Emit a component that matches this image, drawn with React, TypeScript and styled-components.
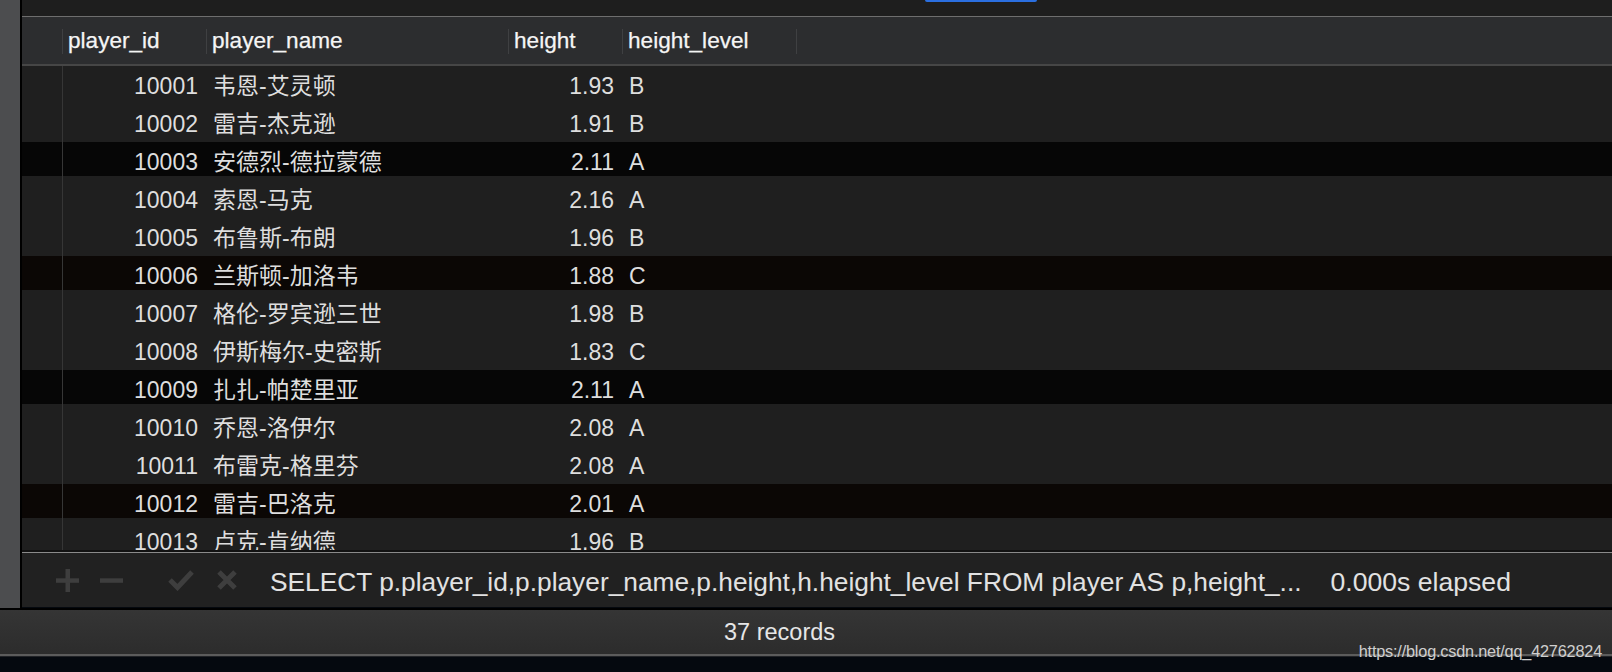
import React from "react";
import styled, { createGlobalStyle } from "styled-components";

const GlobalStyle = createGlobalStyle`
  html, body {
    margin: 0;
    padding: 0;
    background: #05090f;
    width: 1612px;
    height: 672px;
    overflow: hidden;
  }
  * { box-sizing: border-box; }
`;

const FONT = `"Liberation Sans", Arial, "Noto Sans CJK SC", sans-serif`;

type Row = { id: number; name: string; height: string; level: string; tone?: "black" | "brown" };

const rows: Row[] = [
  { id: 10001, name: "韦恩-艾灵顿", height: "1.93", level: "B" },
  { id: 10002, name: "雷吉-杰克逊", height: "1.91", level: "B" },
  { id: 10003, name: "安德烈-德拉蒙德", height: "2.11", level: "A", tone: "black" },
  { id: 10004, name: "索恩-马克", height: "2.16", level: "A" },
  { id: 10005, name: "布鲁斯-布朗", height: "1.96", level: "B" },
  { id: 10006, name: "兰斯顿-加洛韦", height: "1.88", level: "C", tone: "brown" },
  { id: 10007, name: "格伦-罗宾逊三世", height: "1.98", level: "B" },
  { id: 10008, name: "伊斯梅尔-史密斯", height: "1.83", level: "C" },
  { id: 10009, name: "扎扎-帕楚里亚", height: "2.11", level: "A", tone: "black" },
  { id: 10010, name: "乔恩-洛伊尔", height: "2.08", level: "A" },
  { id: 10011, name: "布雷克-格里芬", height: "2.08", level: "A" },
  { id: 10012, name: "雷吉-巴洛克", height: "2.01", level: "A", tone: "brown" },
  { id: 10013, name: "卢克-肯纳德", height: "1.96", level: "B" },
];

const Page = styled.div`
  position: relative;
  width: 1612px;
  height: 672px;
  display: flex;
  flex-direction: column;
  font-family: ${FONT};
  background: #05090f;
`;

const Upper = styled.div`
  display: flex;
  height: 608px;
`;

const SideStrip = styled.div`
  width: 22px;
  background: #4c4d4f;
  border-right: 2px solid #000;
`;

const Main = styled.div`
  flex: 1;
  display: flex;
  flex-direction: column;
  min-width: 0;
`;

const TopBar = styled.div`
  height: 17px;
  background: #1e1e1e;
  border-bottom: 1px solid #6e6e6e;
  position: relative;
`;

const BlueTab = styled.div`
  position: absolute;
  left: 903px;
  top: 0;
  width: 112px;
  height: 2px;
  background: #2b6fe0;
  border-radius: 0 0 2px 2px;
`;

const columns = [
  { key: "blank", width: 41 },
  { key: "player_id", width: 144 },
  { key: "player_name", width: 302 },
  { key: "height", width: 114 },
  { key: "height_level", width: 174 },
];

const HeaderRow = styled.div`
  display: flex;
  height: 49px;
  background: #2c2d2f;
  border-bottom: 2px solid #464646;
`;

const HeadCell = styled.div<{ $w: number }>`
  width: ${(p) => p.$w}px;
  flex: none;
  display: flex;
  align-items: center;
  padding-left: 5px;
  color: #f5f5f5;
  font-size: 22.6px;
  position: relative;
  -webkit-text-stroke: 0.25px #f5f5f5;
  &::after {
    content: "";
    position: absolute;
    right: 0;
    top: 12px;
    bottom: 10px;
    width: 1px;
    background: #3f4042;
  }
`;

const HeadFill = styled.div`
  flex: 1;
`;

const Body = styled.div`
  height: 484px;
  overflow: hidden;
  background: #1f1f1f;
  position: relative;
`;

const GridLine = styled.div`
  position: absolute;
  left: 40px;
  top: 0;
  bottom: 0;
  width: 1px;
  background: #363636;
`;

const BodyRow = styled.div<{ $tone?: "black" | "brown" }>`
  display: flex;
  height: 38px;
  background: ${(p) =>
    p.$tone === "black"
      ? "linear-gradient(#060606 0 34px, #1f1f1f 34px)"
      : p.$tone === "brown"
      ? "linear-gradient(#0b0705 0 34px, #1f1f1f 34px)"
      : "#1f1f1f"};
  color: #dedede;
  font-size: 23px;
  line-height: 34px;
  padding-top: 3px;
`;

const Cell = styled.div<{ $w: number; $align?: "right" | "left" }>`
  width: ${(p) => p.$w}px;
  flex: none;
  text-align: ${(p) => p.$align ?? "left"};
  padding: ${(p) => (p.$align === "right" ? "0 9px 0 0" : "0 0 0 6px")};
  white-space: nowrap;
  overflow: hidden;
`;

const Divider = styled.div`
  height: 3px;
  background: #111;
  border-bottom: 1px solid #8a8a8a;
`;

const Toolbar = styled.div`
  height: 54px;
  background: #212121;
  display: flex;
  align-items: center;
  color: #e2e2e2;
  font-size: 26.3px;
`;

const IconSlot = styled.div<{ $ml: number }>`
  margin-left: ${(p) => p.$ml}px;
  display: flex;
  align-items: center;
  flex: none;
`;

const SqlText = styled.div`
  margin-left: 32px;
  white-space: nowrap;
  flex: none;
  padding-top: 4px;
`;

const Elapsed = styled.div`
  margin-left: 29px;
  white-space: nowrap;
  padding-top: 4px;
  font-size: 26.6px;
`;

const StatusBar = styled.div`
  height: 48px;
  border-top: 2px solid #000;
  background: linear-gradient(#353535, #2c2c2c);
  border-bottom: 2px solid #5c5c5c;
  display: flex;
  align-items: center;
  padding-left: 724px;
  color: #e6e6e6;
  font-size: 23.5px;
`;

const BottomEdge = styled.div`
  flex: 1;
  background: #05090f;
  border-top: 1px solid #202226;
`;

const Watermark = styled.div`
  position: absolute;
  right: 10px;
  top: 642px;
  font-family: "Liberation Sans", Arial, sans-serif;
  font-size: 16.3px;
  color: #cfcfcf;
  letter-spacing: -0.2px;
`;

const ICON = "#3e3e3e";

const PlusIcon = () => (
  <svg width="23" height="23" viewBox="0 0 23 23">
    <rect x="9.5" y="0" width="4.5" height="23" fill={ICON} />
    <rect x="0" y="9.3" width="23" height="4.5" fill={ICON} />
  </svg>
);

const MinusIcon = () => (
  <svg width="23" height="23" viewBox="0 0 23 23">
    <rect x="0" y="9.3" width="23" height="4.5" fill={ICON} />
  </svg>
);

const CheckIcon = () => (
  <svg width="26" height="22" viewBox="0 0 26 22">
    <path d="M2 11 L9.5 18.5 L24 3" stroke={ICON} strokeWidth="5" fill="none" />
  </svg>
);

const CrossIcon = () => (
  <svg width="22" height="22" viewBox="0 0 22 22">
    <path d="M3 3 L19 19 M19 3 L3 19" stroke={ICON} strokeWidth="5" fill="none" />
  </svg>
);

export default function App() {
  return (
    <>
      <GlobalStyle />
      <Page>
        <Upper>
          <SideStrip />
          <Main>
            <TopBar>
              <BlueTab />
            </TopBar>
            <HeaderRow>
              {columns.map((c) => (
                <HeadCell key={c.key} $w={c.width}>
                  {c.key === "blank" ? "" : c.key}
                </HeadCell>
              ))}
              <HeadFill />
            </HeaderRow>
            <Body>
              <GridLine />
              {rows.map((r) => (
                <BodyRow key={r.id} $tone={r.tone}>
                  <Cell $w={columns[0].width} />
                  <Cell $w={columns[1].width} $align="right">
                    {r.id}
                  </Cell>
                  <Cell $w={columns[2].width}>{r.name}</Cell>
                  <Cell $w={columns[3].width} $align="right">
                    {r.height}
                  </Cell>
                  <Cell $w={columns[4].width}>{r.level}</Cell>
                </BodyRow>
              ))}
            </Body>
            <Divider />
            <Toolbar>
              <IconSlot $ml={34}>
                <PlusIcon />
              </IconSlot>
              <IconSlot $ml={21}>
                <MinusIcon />
              </IconSlot>
              <IconSlot $ml={45}>
                <CheckIcon />
              </IconSlot>
              <IconSlot $ml={22}>
                <CrossIcon />
              </IconSlot>
              <SqlText>
                SELECT p.player_id,p.player_name,p.height,h.height_level FROM player AS p,height_...
              </SqlText>
              <Elapsed>0.000s elapsed</Elapsed>
            </Toolbar>
          </Main>
        </Upper>
        <StatusBar>37 records</StatusBar>
        <BottomEdge />
        <Watermark>https://blog.csdn.net/qq_42762824</Watermark>
      </Page>
    </>
  );
}
